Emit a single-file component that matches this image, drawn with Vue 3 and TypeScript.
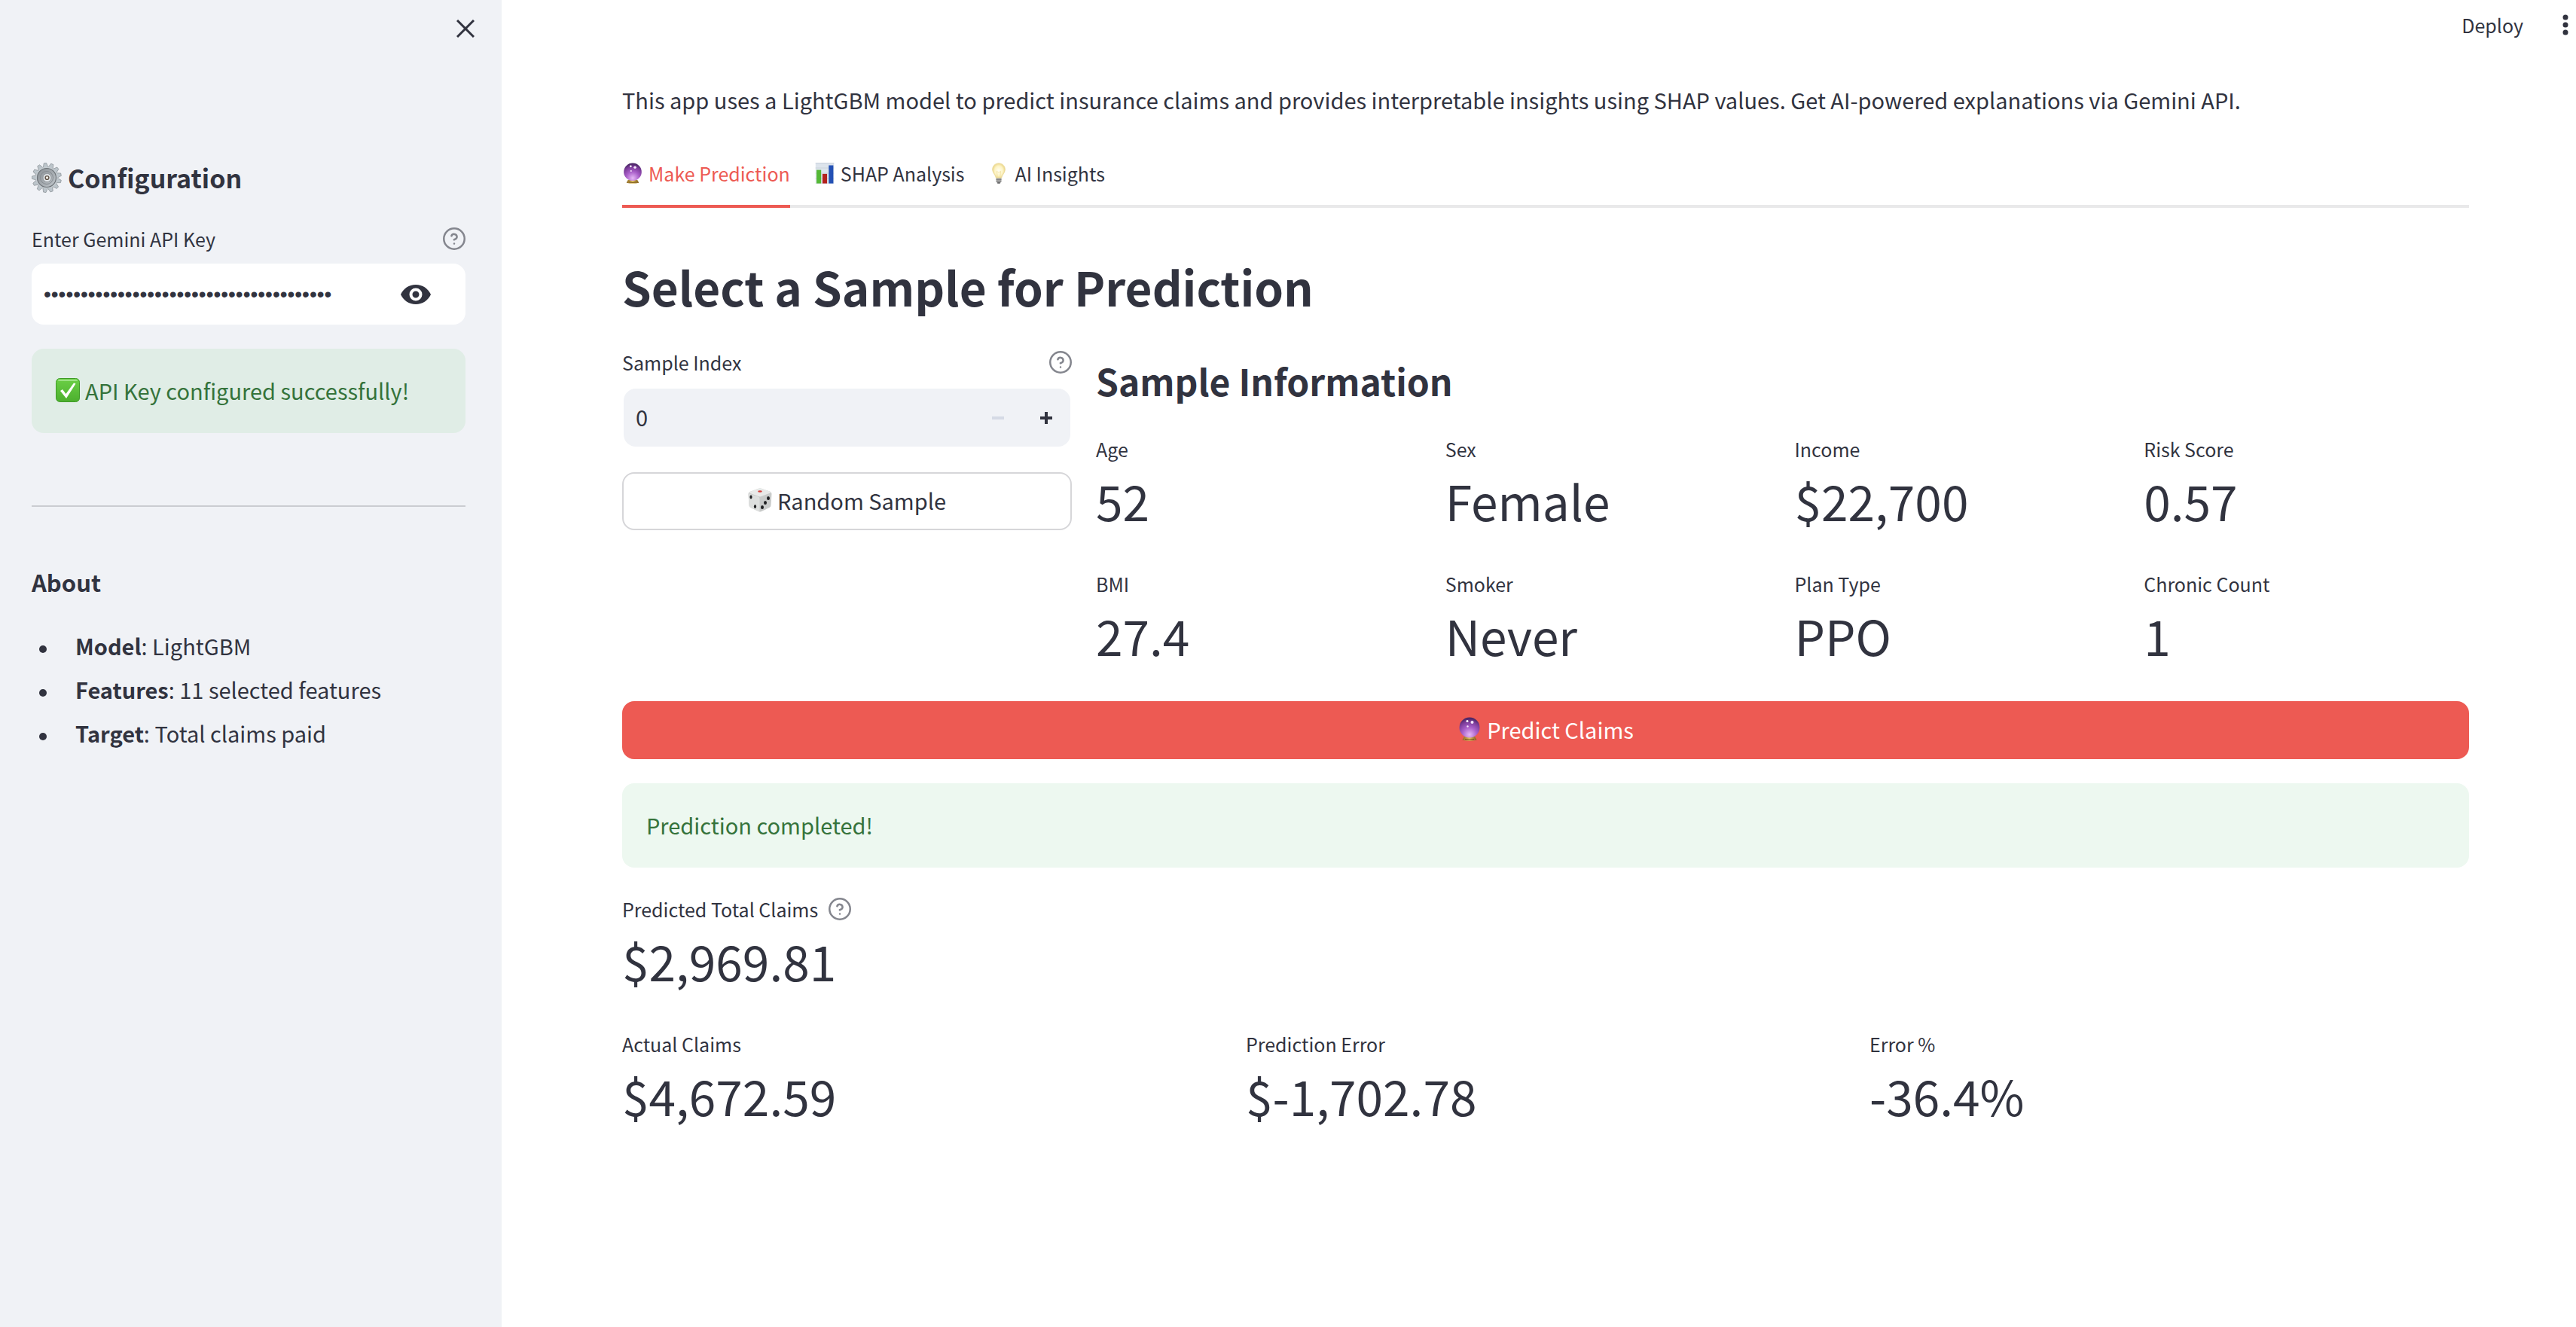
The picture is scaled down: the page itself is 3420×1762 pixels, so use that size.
<script setup lang="ts">
import { ref } from 'vue'

interface Metric {
  label: string
  value: string
}

const apiKey = ref('x'.repeat(39))
const showKey = ref(false)
const sampleIndex = ref(0)
const activeTab = ref(0)

const tabs = [
  { icon: 'ball', label: 'Make Prediction' },
  { icon: 'chart', label: 'SHAP Analysis' },
  { icon: 'bulb', label: 'AI Insights' },
]

const sampleMetrics: Metric[] = [
  { label: 'Age', value: '52' },
  { label: 'Sex', value: 'Female' },
  { label: 'Income', value: '$22,700' },
  { label: 'Risk Score', value: '0.57' },
  { label: 'BMI', value: '27.4' },
  { label: 'Smoker', value: 'Never' },
  { label: 'Plan Type', value: 'PPO' },
  { label: 'Chronic Count', value: '1' },
]

const total: Metric = { label: 'Predicted Total Claims', value: '$2,969.81' }

const resultMetrics: Metric[] = [
  { label: 'Actual Claims', value: '$4,672.59' },
  { label: 'Prediction Error', value: '$-1,702.78' },
  { label: 'Error %', value: '-36.4%' },
]

const facts = [
  { term: 'Model', text: 'LightGBM' },
  { term: 'Features', text: '11 selected features' },
  { term: 'Target', text: 'Total claims paid' },
]

const teeth = Array.from({ length: 13 }, (_, i) => (i * 360) / 13 - 6)
</script>

<template>
  <svg class="defs" aria-hidden="true">
    <defs>
      <radialGradient id="orb" cx="50%" cy="85%" r="80%">
        <stop offset="0" stop-color="#e6b8f6" />
        <stop offset="0.45" stop-color="#a95fc9" />
        <stop offset="0.8" stop-color="#7a3b98" />
        <stop offset="1" stop-color="#4b2766" />
      </radialGradient>
      <linearGradient id="gold" x1="0" x2="1">
        <stop offset="0" stop-color="#8a6420" />
        <stop offset="0.5" stop-color="#e2c260" />
        <stop offset="1" stop-color="#7d5a1c" />
      </linearGradient>
      <radialGradient id="glow">
        <stop offset="0" stop-color="#fffef2" />
        <stop offset="0.65" stop-color="#fdf3c4" />
        <stop offset="1" stop-color="#ecd88c" />
      </radialGradient>
      <linearGradient id="steel" x1="0" y1="0" x2="1" y2="1">
        <stop offset="0" stop-color="#8b9196" />
        <stop offset="0.5" stop-color="#a3a9ae" />
        <stop offset="1" stop-color="#c3c9ce" />
      </linearGradient>
      <linearGradient id="leaf" x1="0" y1="0" x2="0" y2="1">
        <stop offset="0" stop-color="#6bd046" />
        <stop offset="1" stop-color="#4caf2e" />
      </linearGradient>
      <symbol id="ball" viewBox="0 0 28 32">
        <path d="M7 26h14l2.500 4.500q-9.500 2.500-19 0z" fill="url(#gold)" />
        <path d="M8 29.500q6 1.500 12 0" fill="none" stroke="#6d4c16" stroke-width="1" />
        <circle cx="14" cy="14" r="13.500" fill="url(#orb)" />
        <circle cx="11" cy="5.500" r="1.500" fill="#fff" />
        <circle cx="17.500" cy="7" r="2" fill="#f6e6fb" />
        <circle cx="11.500" cy="12.500" r="1.200" fill="#f6e6fb" />
      </symbol>
      <symbol id="chart" viewBox="0 0 28 32">
        <path d="M0 0h28v32H0z" fill="#dde4ec" />
        <path d="M0 1h28M0 8h28M0 16h28M0 24h28" stroke="#c7d0da" stroke-width="1" />
        <path d="M1.500 11h7v20.500h-7z" fill="#55b936" />
        <path d="M10.500 17h7v14.500h-7z" fill="#b3211d" />
        <path d="M20 4h7v27.500h-7z" fill="#2350b4" />
      </symbol>
      <symbol id="bulb" viewBox="0 0 28 32">
        <path d="M14 1c5.800 0 9.500 4.300 9.500 9.300 0 5.500-4.500 7.700-5.500 13.200h-8C9 18 4.500 15.800 4.500 10.300 4.500 5.300 8.200 1 14 1z" fill="url(#glow)" stroke="#e9d795" stroke-width="1" />
        <path d="M12 22l-1-9 3 2 3-2-1 9" fill="none" stroke="#f3e2a3" stroke-width="1" />
        <path d="M10 23.500h8v5l-2 3h-4l-2-3z" fill="#a8a8a6" />
        <path d="M10 25.500h8M10 28h8" stroke="#77777a" stroke-width="1" />
        <path d="M12 30h4v1.500h-4z" fill="#4e4e52" />
      </symbol>
      <symbol id="dice" viewBox="0 0 32 32">
        <path d="M14 .800q2-.800 4 0l11.500 4q2 .800 2 3L30.500 23q0 2-2 3L18 31q-2 1-4 0L3.500 26q-2-1-2-3L.500 8q0-2.200 2-3z" fill="#c9cbca" />
        <path d="M14 .800q2-.800 4 0l11.500 4q1.500 1-.500 2L18 11q-2 .800-4 0L3 7Q1 6 2.500 5z" fill="#e9eae9" />
        <path d="M1 7q6 3 13 4.500 1.500 1 1.500 3V31q-1 0-1.500-.300L3.500 26q-2-1-2-3L.500 8z" fill="#dddfde" />
        <ellipse cx="16" cy="4.500" rx="2.800" ry="1.300" fill="#d6413d" />
        <g fill="#1f2022">
          <ellipse cx="4" cy="12" rx="1.600" ry="2.400" />
          <ellipse cx="9.500" cy="24.500" rx="1.600" ry="2.500" />
          <ellipse cx="27" cy="13.500" rx="2" ry="2.500" />
          <ellipse cx="23" cy="19.500" rx="2" ry="2.500" />
          <ellipse cx="19" cy="25.500" rx="2" ry="2.500" />
        </g>
      </symbol>
      <symbol id="help" viewBox="0 0 24 24">
        <g fill="none" stroke="currentColor" stroke-width="2" stroke-linecap="round" stroke-linejoin="round">
          <circle cx="12" cy="12" r="11" />
          <path d="M9.100 9a3 3 0 0 1 5.800 1c0 2-3 3-3 3M12 17.200h.010" />
        </g>
      </symbol>
    </defs>
  </svg>

  <div class="app">
    <aside class="sidebar">
      <div class="close-row">
        <button class="plain" type="button" aria-label="Close sidebar">
          <svg width="24" height="24" viewBox="0 0 24 24"><path d="M1 1l22 22M23 1L1 23" stroke="currentColor" stroke-width="3" /></svg>
        </button>
      </div>

      <h2 class="config-title">
        <svg width="40" height="40" viewBox="0 0 40 40" aria-hidden="true">
          <path v-for="a in teeth" :key="a" d="M16.500 7L18.300.500h3.400L23.500 7z" fill="#bcc5cb" stroke="#7f868b" stroke-width=".600" :transform="`rotate(${a} 20 20)`" />
          <circle cx="20" cy="20" r="14.500" fill="#c5ccd1" />
          <circle cx="20" cy="20" r="12.500" fill="url(#steel)" stroke="#6d7378" stroke-width="1.200" />
          <circle cx="20" cy="20" r="8.500" fill="none" stroke="#868c91" stroke-width="1" />
          <circle cx="20.500" cy="20" r="5.500" fill="#e3e7ea" stroke="#8f959a" stroke-width="1" />
          <circle cx="20.500" cy="20" r="2.400" fill="#f2ede6" stroke="#5d5247" stroke-width="1.400" />
        </svg>
        <span>Configuration</span>
      </h2>

      <div class="label-row">
        <label for="api-key">Enter Gemini API Key</label>
        <svg class="help" role="img" aria-label="Help"><use href="#help" /></svg>
      </div>
      <div class="key-field">
        <input id="api-key" v-model="apiKey" :type="showKey ? 'text' : 'password'" autocomplete="off" />
        <button class="plain" type="button" aria-label="Show password text" @click="showKey = !showKey">
          <svg width="40" height="26" viewBox="0 0 40 26"><path fill="currentColor" fill-rule="evenodd" d="M20 0C11 0 3.500 5.300 0 13c3.500 7.700 11 13 20 13s16.500-5.300 20-13C36.500 5.300 29 0 20 0zm0 21.500a8.500 8.500 0 1 1 0-17 8.500 8.500 0 0 1 0 17zM20 8.500a4.500 4.500 0 1 0 0 9 4.500 4.500 0 0 0 0-9z" /></svg>
        </button>
      </div>

      <div class="alert key-alert" role="status">
        <svg width="32" height="32" viewBox="0 0 32 32" aria-hidden="true">
          <rect x=".500" y=".500" width="31" height="31" rx="5" fill="url(#leaf)" stroke="#3f9a27" />
          <path d="M4 3h24" stroke="#9be383" stroke-width="2" stroke-linecap="round" />
          <path d="M6 17l3-2 4.500 6L24 6.500l2.500 1L14 27z" fill="#fff" />
        </svg>
        <span>API Key configured successfully!</span>
      </div>

      <hr />

      <h3 class="about-title">About</h3>
      <ul>
        <li v-for="f in facts" :key="f.term"><strong>{{ f.term }}</strong>: {{ f.text }}</li>
      </ul>
    </aside>

    <div class="page">
      <header>
        <button class="plain deploy" type="button">Deploy</button>
        <button class="plain" type="button" aria-label="Main menu">
          <svg width="8" height="28" viewBox="0 0 8 28" fill="currentColor"><circle cx="4" cy="4" r="3.500" /><circle cx="4" cy="14" r="3.500" /><circle cx="4" cy="24" r="3.500" /></svg>
        </button>
      </header>

      <main>
        <p class="intro">This app uses a LightGBM model to predict insurance claims and provides interpretable insights using SHAP values. Get AI-powered explanations via Gemini API.</p>

        <div class="tabs" role="tablist">
          <button
            v-for="(t, i) in tabs"
            :key="t.label"
            class="plain tab"
            :class="{ active: i === activeTab }"
            type="button"
            role="tab"
            :aria-selected="i === activeTab"
            @click="activeTab = i"
          >
            <svg width="28" height="28" aria-hidden="true"><use :href="`#${t.icon}`" /></svg>
            <span>{{ t.label }}</span>
          </button>
        </div>

        <h1>Select a Sample for Prediction</h1>

        <div class="columns">
          <section class="picker">
            <div class="label-row">
              <label for="sample-index">Sample Index</label>
              <svg class="help" role="img" aria-label="Help"><use href="#help" /></svg>
            </div>
            <div class="number-field">
              <input id="sample-index" v-model.number="sampleIndex" type="number" min="0" />
              <button class="plain step" type="button" aria-label="Decrease" :disabled="sampleIndex <= 0" @click="sampleIndex--">
                <svg width="16" height="16" viewBox="0 0 16 16"><path d="M0 6h16v4H0z" fill="currentColor" /></svg>
              </button>
              <button class="plain step" type="button" aria-label="Increase" @click="sampleIndex++">
                <svg width="16" height="16" viewBox="0 0 16 16"><path d="M6 0h4v6h6v4h-6v6H6v-6H0V6h6z" fill="currentColor" /></svg>
              </button>
            </div>
            <button class="action random" type="button">
              <svg width="32" height="32" aria-hidden="true"><use href="#dice" /></svg>
              <span>Random Sample</span>
            </button>
          </section>

          <section class="sample">
            <h2 class="sample-title">Sample Information</h2>
            <dl class="grid four">
              <div v-for="m in sampleMetrics" :key="m.label" class="metric">
                <dt>{{ m.label }}</dt>
                <dd>{{ m.value }}</dd>
              </div>
            </dl>
          </section>
        </div>

        <button class="action predict" type="button">
          <svg width="32" height="32" aria-hidden="true"><use href="#ball" /></svg>
          <span>Predict Claims</span>
        </button>

        <div class="alert" role="status">Prediction completed!</div>

        <dl class="grid">
          <div class="metric">
            <dt>{{ total.label }} <svg class="help" role="img" aria-label="Help"><use href="#help" /></svg></dt>
            <dd>{{ total.value }}</dd>
          </div>
        </dl>

        <dl class="grid three">
          <div v-for="m in resultMetrics" :key="m.label" class="metric">
            <dt>{{ m.label }}</dt>
            <dd>{{ m.value }}</dd>
          </div>
        </dl>
      </main>
    </div>
  </div>
</template>

<style>
body {
  background: #fff;
}
</style>

<style scoped>
.defs {
  position: absolute;
  width: 0;
  height: 0;
}

.app {
  display: flex;
  min-height: 100vh;
  color: #31333f;
  font-family: 'Noto Sans CJK SC', 'Noto Sans', sans-serif;
  font-size: 29px;
}

.app * {
  box-sizing: border-box;
}

h1,
h2,
h3,
p,
ul,
dl,
dd {
  margin: 0;
  padding: 0;
}

svg {
  display: block;
  flex: none;
}

button,
input {
  font: inherit;
  color: inherit;
}

.plain {
  padding: 0;
  border: 0;
  background: none;
  cursor: pointer;
}

.sidebar {
  flex: none;
  width: 666px;
  padding: 0 48px 0 42px;
  background: #f0f2f6;
}

.close-row {
  display: flex;
  align-items: center;
  justify-content: flex-end;
  height: 76px;
}

.close-row .plain {
  margin-right: -12px;
}

.config-title {
  display: flex;
  align-items: center;
  gap: 8px;
  margin-top: 136px;
  margin-bottom: 34px;
  font-size: 34px;
  line-height: 48px;
}

.label-row {
  display: flex;
  align-items: center;
  justify-content: space-between;
  height: 48px;
  padding-bottom: 2px;
  margin-bottom: 8px;
  font-size: 25px;
}

.help {
  width: 30px;
  height: 30px;
  color: #84868e;
}

.key-field {
  display: flex;
  align-items: center;
  height: 81px;
  padding-right: 46px;
  border-radius: 16px;
  background: #fff;
}

.key-field input {
  flex: 1;
  min-width: 0;
  padding: 0 16px;
  border: 0;
  outline: 0;
  background: none;
  font-family: 'Liberation Sans', sans-serif;
  font-size: 28px;
}

.alert {
  display: flex;
  align-items: center;
  gap: 7px;
  height: 112px;
  padding: 0 32px 3px;
  border-radius: 16px;
  background: #edf8f0;
  color: #35733b;
}

.key-alert {
  margin-top: 32px;
  background: #e0ede6;
}

hr {
  height: 2px;
  margin: 96px 0 78px;
  border: 0;
  background: #caccd1;
}

.about-title {
  margin-bottom: 33px;
  font-size: 31px;
  line-height: 44px;
}

ul {
  padding-left: 58px;
  line-height: 58px;
  list-style: none;
}

li::before {
  content: '';
  display: inline-block;
  width: 10px;
  height: 10px;
  margin: 0 38px 0 -48px;
  border-radius: 50%;
  background: currentColor;
  vertical-align: middle;
}

.page {
  flex: 1;
  min-width: 0;
}

header {
  display: flex;
  align-items: center;
  justify-content: flex-end;
  gap: 52px;
  height: 66px;
  padding-right: 10px;
  font-size: 25px;
}

main {
  display: flex;
  flex-direction: column;
  gap: 32px;
  padding: 40px 142px 64px 160px;
}

.intro {
  line-height: 52px;
}

.tabs {
  display: flex;
  gap: 32px;
  margin-top: 18px;
  margin-bottom: 26px;
  font-size: 25px;
  line-height: 44px;
  box-shadow: inset 0 -4px #e9e9ea;
}

.tab {
  display: flex;
  align-items: center;
  gap: 7px;
  padding-bottom: 20px;
  border-bottom: 4px solid transparent;
}

.tab.active {
  border-color: #ed5a53;
  color: #ed5a53;
}

h1 {
  font-size: 62px;
  line-height: 92px;
}

.columns {
  display: flex;
  gap: 32px;
}

.picker {
  flex: 1 1 calc(25% - 32px);
  min-width: 0;
}

.sample {
  flex: 1 1 calc(75% - 32px);
  min-width: 0;
}

.number-field {
  display: flex;
  align-items: center;
  height: 81px;
  border: 2px solid transparent;
  border-radius: 18px;
  background: #f0f2f6 padding-box;
}

.number-field input {
  flex: 1;
  min-width: 0;
  padding: 0 16px 3px;
  border: 0;
  outline: 0;
  background: none;
  appearance: textfield;
}

.step {
  display: flex;
  align-items: center;
  justify-content: center;
  width: 64px;
  height: 100%;
}

.step:disabled {
  color: #d5dae5;
}

.action {
  display: flex;
  align-items: center;
  justify-content: center;
  gap: 7px;
  width: 100%;
  height: 77px;
  padding: 0 0 3px;
  border: 2px solid #d6d6d9;
  border-radius: 16px;
  background: #fff;
  cursor: pointer;
}

.random {
  margin-top: 32px;
}

.predict {
  border-color: #ed5a53;
  background: #ed5a53;
  color: #fff;
}

.sample-title {
  margin-bottom: 32px;
  padding-top: 12px;
  font-size: 48px;
  line-height: 71px;
}

.grid {
  display: grid;
  gap: 32px;
}

.four {
  grid-template-columns: repeat(4, 1fr);
}

.three {
  grid-template-columns: repeat(3, 1fr);
}

.metric {
  padding: 3px 0 8px;
}

dt {
  display: flex;
  align-items: center;
  gap: 14px;
  font-size: 25px;
  line-height: 40px;
}

dd {
  font-size: 64px;
  line-height: 96px;
}
</style>
